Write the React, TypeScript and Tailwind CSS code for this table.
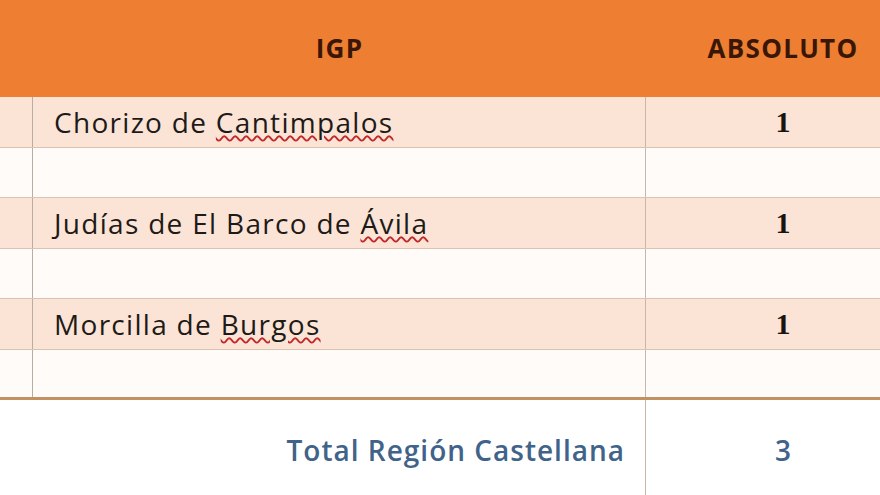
const rows = [
  { name: 'Chorizo de ', flagged: 'Cantimpalos', value: '1' },
  null,
  { name: 'Judías de El Barco de ', flagged: 'Ávila', value: '1' },
  null,
  { name: 'Morcilla de ', flagged: 'Burgos', value: '1' },
  null,
]

export default function App() {
  return (
    <div className="h-[495px] w-[880px] overflow-hidden bg-white" style={{ fontFamily: '"Open Sans", Lato, sans-serif' }}>
      <div className="w-[920px]">
        <div className="grid h-[97px] grid-cols-[33px_613px_274px] items-center bg-[#ee7e32]">
          <div />
          <div className="text-center text-[26px] font-bold tracking-[1.3px] text-[#3a1606]">IGP</div>
          <div className="text-center text-[26px] font-bold tracking-[1.3px] text-[#3a1606]">ABSOLUTO</div>
        </div>

        {rows.map((row, i) => (
          <div
            key={i}
            className={`grid h-[50.5px] grid-cols-[33px_613px_274px] border-b border-[#dcc3b1] ${i % 2 === 0 ? 'bg-[#fbe4d6]' : 'bg-[#fffbf8]'} ${i === rows.length - 1 ? 'border-b-[3px] border-b-[#c3915f]' : ''}`}
          >
            <div className="border-r border-[#b9aca2]" />
            <div className="flex items-center border-r border-[#c8b6a8] pl-[21px] text-[28px] tracking-[1.3px] text-[#1e1a18]">
              {row && (
                <span>
                  {row.name}
                  <span className="underline decoration-[#c0282a] decoration-wavy decoration-[1.5px] underline-offset-[2px]">{row.flagged}</span>
                </span>
              )}
            </div>
            <div className="flex items-center justify-center text-[30px] font-bold text-[#1a1410]" style={{ fontFamily: '"Liberation Serif", serif' }}>
              {row?.value}
            </div>
          </div>
        ))}

        <div className="grid h-[100px] grid-cols-[646px_274px]">
          <div className="flex items-center justify-end border-r border-[#c8b6a8] pr-[20px] text-[28px] font-semibold tracking-[1px] text-[#41638a]">
            Total Región Castellana
          </div>
          <div className="flex items-center justify-center text-[28px] font-semibold text-[#41638a]">3</div>
        </div>
      </div>
    </div>
  )
}
